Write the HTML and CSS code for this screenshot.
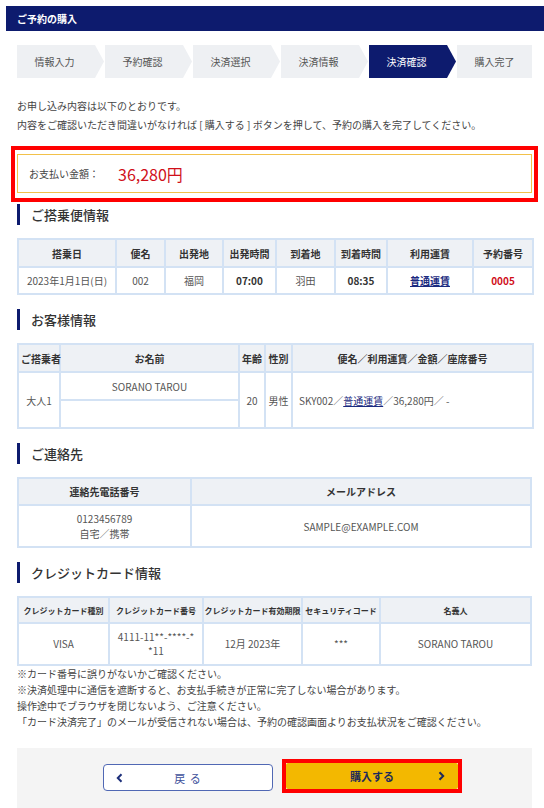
FILE: index.html
```html
<!DOCTYPE html>
<html lang="ja">
<head>
<meta charset="utf-8">
<title>ご予約の購入</title>
<link rel="stylesheet" href="styles.css">
</head>
<body>
<div class="page">
  <div class="titlebar">ご予約の購入</div>
  <div class="content">
    <ol class="steps">
      <li class="step">情報入力</li>
      <li class="step">予約確認</li>
      <li class="step">決済選択</li>
      <li class="step">決済情報</li>
      <li class="step active">決済確認</li>
      <li class="step last">購入完了</li>
    </ol>

    <p class="lead">お申し込み内容は以下のとおりです。<br>内容をご確認いただき間違いがなければ [ 購入する ] ボタンを押して、予約の購入を完了してください。</p>

    <div class="highlight">
      <div class="amount"><span class="amount-label">お支払い金額：</span><span class="amount-value">36,280円</span></div>
    </div>

    <h2 class="sec">ご搭乗便情報</h2>
    <table class="tbl t-flight">
      <colgroup><col class="c98"><col class="c49"><col class="c58"><col class="c53"><col class="c59"><col class="c52"><col class="c86"><col class="c60"></colgroup>
      <tr><th>搭乗日</th><th>便名</th><th>出発地</th><th>出発時間</th><th>到着地</th><th>到着時間</th><th>利用運賃</th><th>予約番号</th></tr>
      <tr><td>2023年1月1日(日)</td><td>002</td><td>福岡</td><td class="strong">07:00</td><td>羽田</td><td class="strong">08:35</td><td><a class="link bold" href="#">普通運賃</a></td><td class="red">0005</td></tr>
    </table>

    <h2 class="sec">お客様情報</h2>
    <table class="tbl t-guest">
      <colgroup><col class="c42"><col class="c179"><col class="c26"><col class="c27"><col class="c241"></colgroup>
      <tr><th>ご搭乗者</th><th>お名前</th><th>年齢</th><th>性別</th><th>便名／利用運賃／金額／座席番号</th></tr>
      <tr class="sub"><td rowspan="2">大人1</td><td>SORANO TAROU</td><td rowspan="2">20</td><td rowspan="2">男性</td><td rowspan="2" class="left">SKY002／<a class="link" href="#">普通運賃</a>／36,280円／ -</td></tr>
      <tr class="sub"><td></td></tr>
    </table>

    <h2 class="sec">ご連絡先</h2>
    <table class="tbl t-contact">
      <colgroup><col class="c173"><col></colgroup>
      <tr><th>連絡先電話番号</th><th>メールアドレス</th></tr>
      <tr><td class="two">0123456789<br>自宅／携帯</td><td>SAMPLE@EXAMPLE.COM</td></tr>
    </table>

    <h2 class="sec">クレジットカード情報</h2>
    <table class="tbl t-card">
      <colgroup><col class="c91"><col class="c94"><col class="c99"><col class="c78"><col></colgroup>
      <tr><th>クレジットカード種別</th><th>クレジットカード番号</th><th>クレジットカード有効期限</th><th>セキュリティコード</th><th>名義人</th></tr>
      <tr><td>VISA</td><td class="cardno">4111-11**-****-**11</td><td>12月 2023年</td><td>***</td><td>SORANO TAROU</td></tr>
    </table>

    <div class="notes">
      <p>※カード番号に誤りがないかご確認ください。</p>
      <p>※決済処理中に通信を遮断すると、お支払手続きが正常に完了しない場合があります。</p>
      <p>操作途中でブラウザを閉じないよう、ご注意ください。</p>
      <p>「カード決済完了」のメールが受信されない場合は、予約の確認画面よりお支払状況をご確認ください。</p>
    </div>

    <div class="actions">
      <button class="btn-back" type="button">
        <svg class="chev" width="7" height="10" viewBox="0 0 7 10"><path d="M5.5 1.2 L1.8 5 L5.5 8.8" fill="none" stroke="#1d2f7a" stroke-width="2"/></svg>
        <span class="btn-text">戻 る</span>
        <span></span>
      </button>
      <div class="btn-frame">
        <button class="btn-buy" type="button">
          <span></span>
          <span class="btn-text">購入する</span>
          <svg class="chev" width="7" height="10" viewBox="0 0 7 10"><path d="M1.5 1.2 L5.2 5 L1.5 8.8" fill="none" stroke="#1d2a5a" stroke-width="2"/></svg>
        </button>
      </div>
    </div>
  </div>
</div>
</body>
</html>
```

FILE: styles.css
```css
* { box-sizing: border-box; }
html, body { margin: 0; padding: 0; background: #fff; }
body {
  font-family: "Noto Sans CJK JP", "Noto Sans", sans-serif;
  color: #444;
  font-size: 10px;
}
.page { padding: 6px 0 0 6px; }
.titlebar {
  height: 25px;
  line-height: 25px;
  background: #0d1b6e;
  color: #fff;
  font-weight: bold;
  font-size: 10px;
  padding-left: 11px;
}
.content { padding: 0 12px 0 11px; }

.steps {
  list-style: none;
  margin: 14px 0 0;
  padding: 0;
  display: flex;
  gap: 1px;
  height: 33px;
}
.step {
  flex: 1 1 0;
  background: #eef0f3;
  color: #555;
  font-size: 10px;
  display: flex;
  align-items: center;
  justify-content: center;
  padding-right: 12px;
  clip-path: polygon(0 0, calc(100% - 9px) 0, 100% 50%, calc(100% - 9px) 100%, 0 100%);
}
.step.active { background: #0d1b6e; color: #fff; }
.step.last { clip-path: none; padding-right: 0; }

.lead {
  margin: 18px 0 0;
  line-height: 19px;
  font-size: 10px;
  color: #444;
}

.highlight {
  margin: 12px -6px 0;
  border: 4px solid #ff0000;
  padding: 4px 2px 5px;
}
.amount {
  border: 1px solid #f2c14a;
  height: 39px;
  display: flex;
  align-items: center;
  padding-left: 11px;
}
.amount-label { font-size: 10px; color: #444; width: 89px; }
.amount-value { font-size: 16px; color: #d0101a; }

.sec {
  margin: 2px 0 13px;
  height: 21px;
  line-height: 21px;
  border-left: 3px solid #0d1b6e;
  padding-left: 11px;
  font-size: 13px;
  font-weight: 500;
  color: #333;
}
.tbl + .sec { margin-top: 14px; }

.tbl {
  width: 100%;
  border-collapse: collapse;
  table-layout: fixed;
  font-size: 10px;
}
.tbl th, .tbl td {
  border: 2px solid #d3e2f4;
  padding: 0 2px;
  text-align: center;
  vertical-align: middle;
  color: #555;
  white-space: nowrap;
}
.tbl th {
  background: #eef1f5;
  font-weight: bold;
  color: #333;
  height: 28px;
}
.tbl td { height: 27px; background: #fff; }
.tbl td.left { text-align: left; padding-left: 6px; }
.strong { font-weight: bold; color: #333 !important; }
.red { color: #d0101a !important; font-weight: bold; }
.link { color: #1a2a80; text-decoration: underline; }
.link.bold { font-weight: bold; }

.c98 { width: 98px; } .c49 { width: 49px; } .c58 { width: 58px; } .c53 { width: 53px; }
.c59 { width: 59px; } .c52 { width: 52px; } .c86 { width: 86px; } .c60 { width: 60px; }
.c42 { width: 42px; } .c179 { width: 179px; } .c26 { width: 26px; } .c27 { width: 27px; } .c241 { width: 241px; }
.c173 { width: 173px; }
.c91 { width: 91px; } .c94 { width: 94px; } .c99 { width: 99px; } .c78 { width: 78px; }

.t-guest th { height: 28px; }
.t-guest .sub td { height: 28px; }
.t-contact th { height: 27px; }
.t-contact td { height: 42px; line-height: 15px; }
.t-card th { font-size: 8px; height: 26px; padding: 0; }
.t-card td { height: 42px; line-height: 14px; }
.t-card td.cardno { white-space: normal; word-break: break-all; padding: 0 6px; }

.notes { margin-top: 0; }
.notes p { margin: 0; line-height: 16px; font-size: 10px; color: #444; }

.actions {
  margin-top: 18px;
  background: #f4f4f4;
  height: 70px;
  display: flex;
  justify-content: center;
  align-items: flex-start;
  gap: 9px;
  padding: 11px 0 0 16px;
}
.btn-back, .btn-buy {
  font-family: inherit;
  display: grid;
  grid-template-columns: 1fr auto 1fr;
  align-items: center;
  padding: 0;
  cursor: pointer;
}
.btn-back {
  margin-top: 5px;
  width: 170px;
  height: 27px;
  background: #fff;
  border: 1px solid #5068b4;
  border-radius: 4px;
}
.btn-back .chev { justify-self: start; margin-left: 12px; }
.btn-back .btn-text { color: #3d4f9a; font-size: 11px; letter-spacing: 1px; }
.btn-frame {
  border: 4px solid #ff0000;
  width: 180px;
  height: 34px;
}
.btn-buy {
  width: 100%;
  height: 100%;
  background: #f3b800;
  border: 0;
  border-radius: 2px;
}
.btn-buy .btn-text { color: #1d2a5a; font-weight: bold; font-size: 11px; }
.btn-buy .chev { justify-self: end; margin-right: 13px; }
```
